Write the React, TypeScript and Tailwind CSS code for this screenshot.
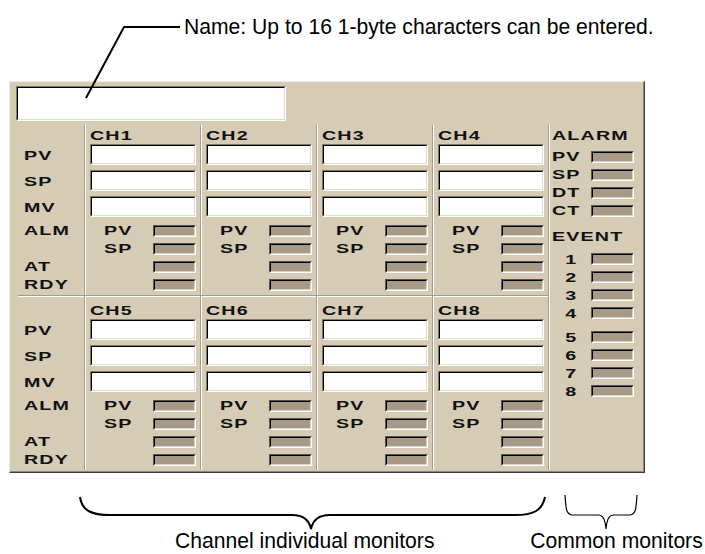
import React from 'react';

const TOP = ['CH1', 'CH2', 'CH3', 'CH4'];
const BOTTOM = ['CH5', 'CH6', 'CH7', 'CH8'];

function Lbl({ children, right }: { children: React.ReactNode; right?: boolean }) {
  return (
    <span
      className={`inline-block font-['Liberation_Sans',sans-serif] text-[12px] font-bold leading-none tracking-[0.7px] text-[#111] scale-x-[1.64] ${
        right ? 'origin-right' : 'origin-left'
      }`}
    >
      {children}
    </span>
  );
}

// sunken 3d edit box
function Field({ className }: { className: string }) {
  return (
    <div className={`border border-t-[#7e776a] border-l-[#7e776a] border-r-white border-b-white ${className}`}>
      <div className="h-full w-full border border-t-black border-l-black border-r-[#e4dccb] border-b-[#e4dccb] bg-white" />
    </div>
  );
}

function Lamp() {
  return (
    <div className="h-[12px] w-[43px] border border-t-[#5a5448] border-l-[#5a5448] border-r-white border-b-white">
      <div className="h-full w-full border border-t-black border-l-black border-r-[#ddd5c4] border-b-[#ddd5c4] bg-[#a69a87]" />
    </div>
  );
}

function Channel({ name, lower }: { name: string; lower?: boolean }) {
  return (
    <div
      className={
        lower
          ? 'flex h-[175px] w-[116px] flex-col border-t border-l border-t-[#a49b89] border-l-[#a49b89] pt-[4px] pl-[5px] shadow-[inset_1px_1px_0_#fff]'
          : 'flex h-[170px] w-[116px] flex-col border-l border-l-[#a49b89] pl-[5px] shadow-[inset_1px_0_0_#fff]'
      }
    >
      <div className="flex h-[19px] items-center pt-[3px]">
        <Lbl>{name}</Lbl>
      </div>
      <div className="flex w-[106px] flex-col gap-[5px]">
        <Field className="h-[21px] w-[106px]" />
        <Field className="h-[21px] w-[106px]" />
        <Field className="h-[21px] w-[106px]" />
      </div>
      <div className="mt-[8px] flex w-[106px] flex-col gap-[6px]">
        <div className="flex h-[12px] items-center justify-between pl-[14px]">
          <Lbl>PV</Lbl>
          <Lamp />
        </div>
        <div className="flex h-[12px] items-center justify-between pl-[14px]">
          <Lbl>SP</Lbl>
          <Lamp />
        </div>
        <div className="flex h-[12px] items-center justify-end">
          <Lamp />
        </div>
        <div className="flex h-[12px] items-center justify-end">
          <Lamp />
        </div>
      </div>
    </div>
  );
}

function Labels() {
  return (
    <div className="flex flex-col pl-[14px]">
      <div className="h-[19px]" />
      <div className="flex flex-col gap-[5px]">
        <div className="flex h-[21px] items-center pt-[3px]"><Lbl>PV</Lbl></div>
        <div className="flex h-[21px] items-center pt-[3px]"><Lbl>SP</Lbl></div>
        <div className="flex h-[21px] items-center pt-[3px]"><Lbl>MV</Lbl></div>
      </div>
      <div className="mt-[8px] flex flex-col gap-[6px]">
        <div className="flex h-[12px] items-center"><Lbl>ALM</Lbl></div>
        <div className="h-[12px]" />
        <div className="flex h-[12px] items-center"><Lbl>AT</Lbl></div>
        <div className="flex h-[12px] items-center"><Lbl>RDY</Lbl></div>
      </div>
    </div>
  );
}

function AlarmRow({ label, num }: { label: string; num?: boolean }) {
  return (
    <div className="flex h-[12px] w-[82px] items-center">
      {num ? (
        <div className="w-[25px] text-right">
          <Lbl right>{label}</Lbl>
        </div>
      ) : (
        <Lbl>{label}</Lbl>
      )}
      <div className="ml-auto">
        <Lamp />
      </div>
    </div>
  );
}

export default function App() {
  return (
    <div className="relative h-[554px] w-[705px] overflow-hidden bg-white font-['Liberation_Sans',sans-serif] text-black">
      <div className="h-[81px] pt-[16px] pl-[184px] text-[22px] leading-[22px] whitespace-nowrap">
        <span className="inline-block origin-left scale-x-[0.96]">Name: Up to 16 1-byte characters can be entered.</span>
      </div>

      <div className="ml-[9px] w-[636px] border-t border-l border-r border-b border-t-[#f1ece1] border-l-[#f1ece1] border-r-[#3c3c3c] border-b-[#3c3c3c] bg-[#d6cbb4] pb-[2px] shadow-[inset_-1px_-1px_0_#8f887a]">
        <div className="h-[43px] pt-[4px] pl-[6px]">
          <Field className="h-[35px] w-[270px]" />
        </div>
        <div className="flex">
          <div className="flex flex-col">
            <div className="flex">
              <div className="h-[170px] w-[74px]">
                <Labels />
              </div>
              {TOP.map(n => (
                <Channel key={n} name={n} />
              ))}
            </div>
            <div className="flex">
              <div className="h-[175px] w-[74px]">
                <div className="ml-[8px] h-full border-t border-t-[#a49b89] pt-[4px] shadow-[inset_0_1px_0_#fff]">
                  <div className="-ml-[8px]">
                    <Labels />
                  </div>
                </div>
              </div>
              {BOTTOM.map(n => (
                <Channel key={n} name={n} lower />
              ))}
            </div>
          </div>

          <div className="flex h-[345px] flex-1 flex-col border-l border-l-[#a49b89] pl-[3px] shadow-[inset_1px_0_0_#fff]">
            <div className="flex h-[19px] items-center pt-[3px]">
              <Lbl>ALARM</Lbl>
            </div>
            <div className="mt-[7px] flex flex-col gap-[6px]">
              <AlarmRow label="PV" />
              <AlarmRow label="SP" />
              <AlarmRow label="DT" />
              <AlarmRow label="CT" />
            </div>
            <div className="mt-[14px] flex h-[12px] items-center">
              <Lbl>EVENT</Lbl>
            </div>
            <div className="mt-[10px] flex flex-col gap-[6px]">
              <AlarmRow label="1" num />
              <AlarmRow label="2" num />
              <AlarmRow label="3" num />
              <AlarmRow label="4" num />
            </div>
            <div className="mt-[12px] flex flex-col gap-[6px]">
              <AlarmRow label="5" num />
              <AlarmRow label="6" num />
              <AlarmRow label="7" num />
              <AlarmRow label="8" num />
            </div>
          </div>
        </div>
      </div>

      <div className="mt-[57px] flex text-[22px] leading-[22px] whitespace-nowrap">
        <div className="w-[538px] pl-[175px]">
          <span className="inline-block origin-left scale-x-[0.96]">Channel individual monitors</span>
        </div>
        <div className="flex-1 pr-[2px] text-right">
          <span className="inline-block origin-right scale-x-[0.96]">Common monitors</span>
        </div>
      </div>

      <svg className="pointer-events-none absolute top-0 left-0" width="705" height="554" viewBox="0 0 705 554" fill="none" stroke="black">
        <path d="M86 98 L124 27 L180 27" strokeWidth="2" />
        <path
          d="M80 497 C82 511 92 515 110 515 L292 515 C303 515 309 519 311 529 C313 519 319 515 330 515 L515 515 C533 515 542 511 545 497"
          strokeWidth="2"
        />
        <path
          d="M565 495 C566 509 566 514 572 515 L598 515 C603 515 605 519 606 529 C607 519 609 515 614 515 L630 515 C636 514 636 509 637 495"
          strokeWidth="1.2"
        />
      </svg>
    </div>
  );
}
